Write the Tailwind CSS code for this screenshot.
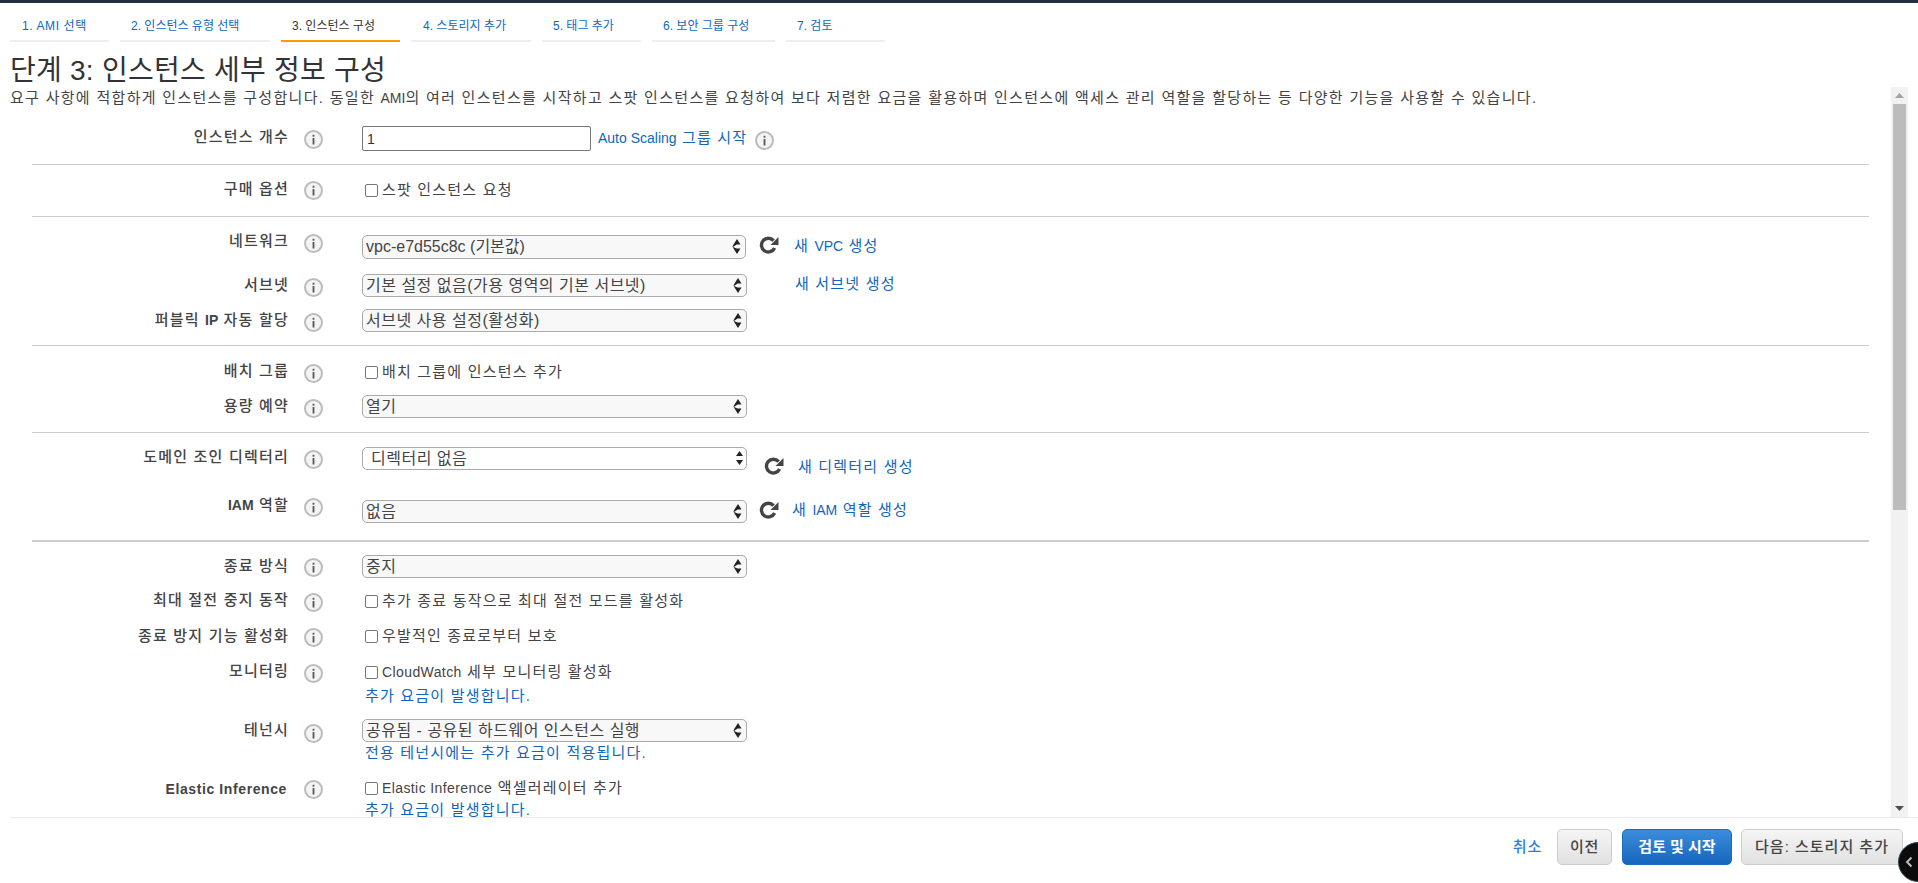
<!doctype html>
<html lang="ko">
  <head>
    <meta charset="utf-8" />
    <title>인스턴스 세부 정보 구성</title>
    <script src="https://cdn.jsdelivr.net/npm/@tailwindcss/browser@4"></script>
  </head>
  <body class="h-screen overflow-hidden bg-white text-[14px] text-[#444] font-['Liberation_Sans','Noto_Sans_CJK_KR',sans-serif]">
    <!-- shared icons -->
    <svg class="hidden">
      <symbol id="info" viewBox="0 0 19 19">
        <circle cx="9.5" cy="9.5" r="8.5" fill="#f4f4f4" stroke="#bcbcbc" stroke-width="2" />
        <rect x="8.6" y="8" width="1.8" height="6.5" fill="#555" />
        <rect x="8.6" y="4.8" width="1.8" height="1.9" fill="#555" />
      </symbol>
      <symbol id="refresh" viewBox="0 0 20 18">
        <path d="M14.6 4.6A6.9 6.9 0 1 0 15.6 12" fill="none" stroke="#444" stroke-width="3.4" />
        <path d="M19.5 1v8h-8z" fill="#444" />
      </symbol>
      <symbol id="updown" viewBox="0 0 9 15">
        <path d="M5 0l3.5 5.5H4.6L1 8l3.6 1.6h3.9L5 15 1.2 9 .5 7.6 1.2 6z" fill="#222" />
      </symbol>
    </svg>

    <div class="flex h-full flex-col">
      <div class="h-[3px] shrink-0 bg-[#232f3e]"></div>

      <!-- wizard steps -->
      <nav class="flex shrink-0 gap-[11px] pt-[9px] pl-[10px] text-[12px] text-[#1166bb]">
        <a class="h-[30px] w-[99px] border-b-2 border-[#eee] pt-[5px] pl-[12px] tracking-[0.6px]">1. AMI 선택</a>
        <a class="h-[30px] w-[150px] border-b-2 border-[#eee] pt-[5px] pl-[11px]">2. 인스턴스 유형 선택</a>
        <a class="h-[30px] w-[119px] border-b-2 border-[#f90] pt-[5px] pl-[11px] text-[#333]">3. 인스턴스 구성</a>
        <a class="h-[30px] w-[120px] border-b-2 border-[#eee] pt-[5px] pl-[12px]">4. 스토리지 추가</a>
        <a class="h-[30px] w-[99px] border-b-2 border-[#eee] pt-[5px] pl-[11px]">5. 태그 추가</a>
        <a class="h-[30px] w-[123px] border-b-2 border-[#eee] pt-[5px] pl-[11px]">6. 보안 그룹 구성</a>
        <a class="h-[30px] w-[99px] border-b-2 border-[#eee] pt-[5px] pl-[11px]">7. 검토</a>
      </nav>

      <header class="shrink-0 pl-[10px]">
        <h1 class="mt-[14px] h-[31px] text-[28px] leading-[30px] tracking-[0.25px] text-[#333]">단계 3: 인스턴스 세부 정보 구성</h1>
      </header>

      <div class="flex min-h-0 flex-1 pr-[10px] pl-[10px]">
        <main class="min-w-0 flex-1 overflow-hidden pr-[22px] pl-[22px] text-[15px] leading-[20px] tracking-[1.2px]">
          <p class="mt-[1px] -ml-[22px] h-[20px] whitespace-nowrap tracking-[1.3px]">요구 사항에 적합하게 인스턴스를 구성합니다. 동일한 <span class="text-[14px] tracking-normal">AMI</span>의 여러 인스턴스를 시작하고 스팟 인스턴스를 요청하여 보다 저렴한 요금을 활용하며 인스턴스에 액세스 관리 역할을 할당하는 등 다양한 기능을 사용할 수 있습니다.</p>

          <!-- 인스턴스 개수 -->
          <section class="mt-[18px] border-b border-[#ccc]">
            <div class="grid h-[38px] grid-cols-[257px_73px_1fr] items-start">
              <label class="mt-[1px] text-right font-medium">인스턴스 개수</label>
              <svg class="mt-[4px] ml-[15px] size-[19px]"><use href="#info" /></svg>
              <div class="flex items-start">
                <input value="1" class="h-[25px] w-[229px] rounded-[2px] border border-[#777] px-[4px] text-[14px] text-[#333]" />
                <a class="mt-[2px] ml-[7px] text-[#1166bb]"><span class="text-[14px] tracking-normal">Auto Scaling</span> 그룹 시작</a>
                <svg class="mt-[5px] ml-[8px] size-[19px]"><use href="#info" /></svg>
              </div>
            </div>
          </section>

          <!-- 구매 옵션 -->
          <section class="border-b border-[#ccc]">
            <div class="grid h-[51px] grid-cols-[257px_73px_1fr] items-start">
              <label class="mt-[14px] text-right font-medium">구매 옵션</label>
              <svg class="mt-[16px] ml-[15px] size-[19px]"><use href="#info" /></svg>
              <label class="mt-[15px] ml-[3px] flex items-center gap-[4px]"><input type="checkbox" class="size-[13px] appearance-none rounded-[2px] border border-[#767676] bg-white" />스팟 인스턴스 요청</label>
            </div>
          </section>

          <!-- 네트워크 -->
          <section class="border-b border-[#ccc] pt-[12px]">
            <div class="grid h-[40px] grid-cols-[257px_73px_1fr] items-start">
              <label class="mt-[2px] text-right font-medium">네트워크</label>
              <svg class="mt-[5px] ml-[15px] size-[19px]"><use href="#info" /></svg>
              <div class="flex items-start">
                <div class="relative mt-[6px] h-[24px] w-[384px]">
                  <select class="h-full w-full appearance-none rounded-[5px] border border-[#aaa] bg-[#f8f8f8] pl-[3px] text-[16px] tracking-normal"><option>vpc-e7d55c8c (기본값)</option></select>
                  <svg class="absolute top-[4px] right-[5px] h-[15px] w-[9px]"><use href="#updown" /></svg>
                </div>
                <svg class="mt-[7px] ml-[13px] h-[18px] w-[20px]"><use href="#refresh" /></svg>
                <a class="mt-[7px] ml-[15px] text-[#1166bb]">새 <span class="text-[14px] tracking-normal">VPC</span> 생성</a>
              </div>
            </div>
            <div class="grid h-[36px] grid-cols-[257px_73px_1fr] items-start">
              <label class="mt-[6px] text-right font-medium">서브넷</label>
              <svg class="mt-[9px] ml-[15px] size-[19px]"><use href="#info" /></svg>
              <div class="flex items-start">
                <div class="relative mt-[5px] h-[23px] w-[385px]">
                  <select class="h-full w-full appearance-none rounded-[5px] border border-[#aaa] bg-[#f8f8f8] pl-[3px] text-[16px] tracking-[0.5px]"><option>기본 설정 없음(가용 영역의 기본 서브넷)</option></select>
                  <svg class="absolute top-[4px] right-[5px] h-[15px] w-[9px]"><use href="#updown" /></svg>
                </div>
                <a class="mt-[5px] ml-[48px] text-[#1166bb]">새 서브넷 생성</a>
              </div>
            </div>
            <div class="grid h-[40px] grid-cols-[257px_73px_1fr] items-start">
              <label class="mt-[5px] text-right font-medium">퍼블릭 <span class="text-[14px] font-bold tracking-normal">IP</span> 자동 할당</label>
              <svg class="mt-[8px] ml-[15px] size-[19px]"><use href="#info" /></svg>
              <div class="relative mt-[4px] h-[23px] w-[385px]">
                <select class="h-full w-full appearance-none rounded-[5px] border border-[#aaa] bg-[#f8f8f8] pl-[3px] text-[16px] tracking-[0.5px]"><option>서브넷 사용 설정(활성화)</option></select>
                <svg class="absolute top-[4px] right-[5px] h-[15px] w-[9px]"><use href="#updown" /></svg>
              </div>
            </div>
          </section>

          <!-- 배치 그룹 -->
          <section class="border-b border-[#ccc]">
            <div class="grid h-[48px] grid-cols-[257px_73px_1fr] items-start">
              <label class="mt-[15px] text-right font-medium">배치 그룹</label>
              <svg class="mt-[18px] ml-[15px] size-[19px]"><use href="#info" /></svg>
              <label class="mt-[16px] ml-[3px] flex items-center gap-[4px]"><input type="checkbox" class="size-[13px] appearance-none rounded-[2px] border border-[#767676] bg-white" />배치 그룹에 인스턴스 추가</label>
            </div>
            <div class="grid h-[38px] grid-cols-[257px_73px_1fr] items-start">
              <label class="mt-[2px] text-right font-medium">용량 예약</label>
              <svg class="mt-[5px] ml-[15px] size-[19px]"><use href="#info" /></svg>
              <div class="relative mt-[1px] h-[23px] w-[385px]">
                <select class="h-full w-full appearance-none rounded-[5px] border border-[#aaa] bg-[#f8f8f8] pl-[3px] text-[16px] tracking-[0.5px]"><option>열기</option></select>
                <svg class="absolute top-[4px] right-[5px] h-[15px] w-[9px]"><use href="#updown" /></svg>
              </div>
            </div>
          </section>

          <!-- 도메인 / IAM -->
          <section class="border-b-2 border-[#ccc]">
            <div class="grid h-[50px] grid-cols-[257px_73px_1fr] items-start">
              <label class="mt-[14px] text-right font-medium">도메인 조인 디렉터리</label>
              <svg class="mt-[17px] ml-[15px] size-[19px]"><use href="#info" /></svg>
              <div class="flex items-start">
                <div class="relative mt-[14px] h-[23px] w-[385px]">
                  <select class="h-full w-full appearance-none rounded-[5px] border border-[#aaa] bg-white pl-[8px] text-[16px] tracking-[0.5px]"><option>디렉터리 없음</option></select>
                  <svg class="absolute top-[4px] right-[4px] h-[14px] w-[7px]" viewBox="0 0 7 14"><path d="M3.5 0L7 5H0zM3.5 14L0 9h7z" fill="#222" /></svg>
                </div>
                <svg class="mt-[24px] ml-[17px] h-[18px] w-[20px]"><use href="#refresh" /></svg>
                <a class="mt-[24px] ml-[14px] text-[#1166bb]">새 디렉터리 생성</a>
              </div>
            </div>
            <div class="grid h-[57px] grid-cols-[257px_73px_1fr] items-start">
              <label class="mt-[12px] text-right font-medium"><span class="text-[14px] font-bold tracking-normal">IAM</span> 역할</label>
              <svg class="mt-[15px] ml-[15px] size-[19px]"><use href="#info" /></svg>
              <div class="flex items-start">
                <div class="relative mt-[17px] h-[23px] w-[385px]">
                  <select class="h-full w-full appearance-none rounded-[5px] border border-[#aaa] bg-[#f8f8f8] pl-[3px] text-[16px] tracking-[0.5px]"><option>없음</option></select>
                  <svg class="absolute top-[4px] right-[5px] h-[15px] w-[9px]"><use href="#updown" /></svg>
                </div>
                <svg class="mt-[18px] ml-[12px] h-[18px] w-[20px]"><use href="#refresh" /></svg>
                <a class="mt-[17px] ml-[13px] text-[#1166bb]">새 <span class="text-[14px] tracking-normal">IAM</span> 역할 생성</a>
              </div>
            </div>
          </section>

          <!-- 종료 방식 이하 -->
          <section>
            <div class="grid h-[45px] grid-cols-[257px_73px_1fr] items-start">
              <label class="mt-[14px] text-right font-medium">종료 방식</label>
              <svg class="mt-[16px] ml-[15px] size-[19px]"><use href="#info" /></svg>
              <div class="relative mt-[13px] h-[23px] w-[385px]">
                <select class="h-full w-full appearance-none rounded-[5px] border border-[#aaa] bg-[#f8f8f8] pl-[3px] text-[16px] tracking-[0.5px]"><option>중지</option></select>
                <svg class="absolute top-[4px] right-[5px] h-[15px] w-[9px]"><use href="#updown" /></svg>
              </div>
            </div>
            <div class="grid h-[36px] grid-cols-[257px_73px_1fr] items-start">
              <label class="mt-[3px] text-right font-medium">최대 절전 중지 동작</label>
              <svg class="mt-[6px] ml-[15px] size-[19px]"><use href="#info" /></svg>
              <label class="mt-[4px] ml-[3px] flex items-center gap-[4px]"><input type="checkbox" class="size-[13px] appearance-none rounded-[2px] border border-[#767676] bg-white" />추가 종료 동작으로 최대 절전 모드를 활성화</label>
            </div>
            <div class="grid h-[35px] grid-cols-[257px_73px_1fr] items-start">
              <label class="mt-[3px] text-right font-medium">종료 방지 기능 활성화</label>
              <svg class="mt-[5px] ml-[15px] size-[19px]"><use href="#info" /></svg>
              <label class="mt-[3px] ml-[3px] flex items-center gap-[4px]"><input type="checkbox" class="size-[13px] appearance-none rounded-[2px] border border-[#767676] bg-white" />우발적인 종료로부터 보호</label>
            </div>
            <div class="grid h-[55px] grid-cols-[257px_73px_1fr] items-start">
              <label class="mt-[3px] text-right font-medium">모니터링</label>
              <svg class="mt-[6px] ml-[15px] size-[19px]"><use href="#info" /></svg>
              <div class="mt-[4px]">
                <label class="ml-[3px] flex items-center gap-[4px]"><input type="checkbox" class="size-[13px] appearance-none rounded-[2px] border border-[#767676] bg-white" /><span><span class="text-[14px] tracking-[0.4px]">CloudWatch</span> 세부 모니터링 활성화</span></label>
                <a class="mt-[4px] ml-[3px] block text-[#1166bb]">추가 요금이 발생합니다.</a>
              </div>
            </div>
            <div class="grid h-[60px] grid-cols-[257px_73px_1fr] items-start">
              <label class="mt-[7px] text-right font-medium">테넌시</label>
              <svg class="mt-[11px] ml-[15px] size-[19px]"><use href="#info" /></svg>
              <div class="mt-[6px]">
                <div class="relative h-[23px] w-[385px]">
                  <select class="h-full w-full appearance-none rounded-[5px] border border-[#aaa] bg-[#f8f8f8] pl-[3px] text-[16px] tracking-[0.5px]"><option>공유됨 - 공유된 하드웨어 인스턴스 실행</option></select>
                  <svg class="absolute top-[4px] right-[5px] h-[15px] w-[9px]"><use href="#updown" /></svg>
                </div>
                <a class="mt-[1px] ml-[3px] block text-[#1166bb]">전용 테넌시에는 추가 요금이 적용됩니다.</a>
              </div>
            </div>
            <div class="grid h-[60px] grid-cols-[257px_73px_1fr] items-start">
              <label class="mt-[6px] pr-[2px] text-right text-[14px] font-bold tracking-[0.6px]">Elastic Inference</label>
              <svg class="mt-[7px] ml-[15px] size-[19px]"><use href="#info" /></svg>
              <div class="mt-[5px]">
                <label class="ml-[3px] flex items-center gap-[4px]"><input type="checkbox" class="size-[13px] appearance-none rounded-[2px] border border-[#767676] bg-white" /><span><span class="text-[14px] tracking-[0.4px]">Elastic Inference</span> 액셀러레이터 추가</span></label>
                <a class="mt-[2px] ml-[3px] block text-[#1166bb]">추가 요금이 발생합니다.</a>
              </div>
            </div>
          </section>
        </main>

        <!-- scrollbar -->
        <div class="flex w-[17px] shrink-0 flex-col items-center bg-[#f1f1f1]">
          <svg class="mt-[6px] h-[5px] w-[9px] shrink-0" viewBox="0 0 9 5"><path d="M4.5 0L9 5H0z" fill="#a3a3a3" /></svg>
          <div class="mt-[6px] h-[406px] w-[13px] shrink-0 bg-[#bcbcbc]"></div>
          <svg class="mt-auto mb-[6px] h-[5px] w-[9px] shrink-0" viewBox="0 0 9 5"><path d="M4.5 5L0 0h9z" fill="#505050" /></svg>
        </div>
      </div>

      <!-- footer actions -->
      <footer class="relative ml-[10px] flex h-[66px] shrink-0 items-start justify-end border-t border-[#eaeaea] pt-[11px] pr-[15px] text-[15px] tracking-[0.8px]">
        <a class="mt-[7px] font-medium text-[#2f7fd6]">취소</a>
        <button class="ml-[15px] h-[36px] w-[55px] rounded-[5px] border border-[#ccc] bg-linear-to-b from-[#f5f5f5] to-[#e1e1e1] font-medium text-[#444]">이전</button>
        <button class="ml-[10px] h-[36px] w-[110px] rounded-[5px] border border-[#1b6dbd] bg-linear-to-b from-[#3b8ddb] to-[#1565bd] font-bold tracking-normal text-white">검토 및 시작</button>
        <button class="ml-[9px] h-[36px] w-[162px] rounded-[5px] border border-[#ccc] bg-linear-to-b from-[#f5f5f5] to-[#e1e1e1] font-medium tracking-[1px] text-[#444]">다음: 스토리지 추가</button>
        <div class="absolute top-[24px] -right-[20px] flex size-[40px] items-center rounded-full border border-[#2f4a5a] bg-[#0b0b0b] pl-[6px]">
          <svg class="h-[12px] w-[8px]" viewBox="0 0 8 12"><path d="M6.5 1.5L2 6l4.5 4.5" fill="none" stroke="#bbb" stroke-width="2" /></svg>
        </div>
      </footer>
    </div>
  </body>
</html>
